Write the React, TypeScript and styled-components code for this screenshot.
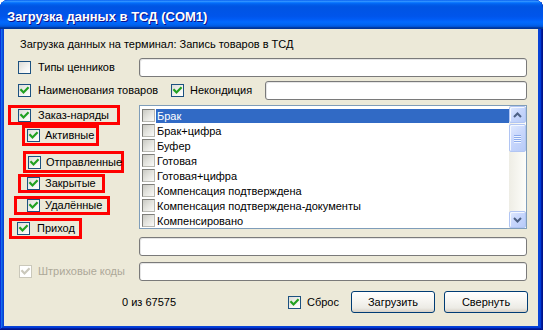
import React from "react";
import styled, { createGlobalStyle, css } from "styled-components";

const GlobalStyle = createGlobalStyle`
  html, body { margin: 0; padding: 0; background: #ffffff; }
  body { font-family: "Liberation Sans", Arial, sans-serif; font-size: 11px; color: #000; }
  * { box-sizing: border-box; }
`;

const Window = styled.div`
  width: 543px;
  height: 330px;
  display: flex;
  flex-direction: column;
  background: #0842d6;
  border-radius: 8px 8px 0 0;
  overflow: hidden;
  box-shadow: inset -1px -1px #00138c, inset 1px 1px #0831d9, inset -2px -2px #001ea0,
    inset 2px 2px #166aee, inset -3px -3px #003bda, inset 3px 3px #0855dd;
`;

const TitleBar = styled.div`
  height: 29px;
  flex: none;
  display: flex;
  align-items: center;
  padding: 3px 0 0 7px;
  color: #fff;
  font-family: "Liberation Sans", Arial, sans-serif;
  font-weight: bold;
  font-size: 13px;
  text-shadow: 1px 1px #0f1089;
  background: linear-gradient(
    180deg,
    #0058ee 0%,
    #3593ff 4%,
    #288eff 6%,
    #127dff 8%,
    #036ffc 10%,
    #0262ee 14%,
    #0057e5 20%,
    #0054e3 24%,
    #0055eb 56%,
    #005bf5 66%,
    #026afe 76%,
    #0062ef 86%,
    #0052d6 92%,
    #0040ab 94%,
    #003092 100%
  );
`;

const Body = styled.div`
  flex: 1;
  margin: 0 5px 4px 4px;
  background: #ece9d8;
  padding: 9px 11px 0 0;
  display: flex;
  flex-direction: column;
`;

const Header = styled.div`
  padding-left: 16px;
  height: 13px;
  line-height: 13px;
  white-space: nowrap;
`;

const FieldRow = styled.div<{ $mt: number }>`
  display: grid;
  grid-template-columns: 135px 1fr;
  align-items: center;
  height: 19px;
  margin-top: ${(p) => p.$mt}px;
`;

const LeftCell = styled.div<{ $pl: number }>`
  display: flex;
  align-items: center;
  padding-left: ${(p) => p.$pl}px;
  height: 100%;
`;

const FlexRow = styled.div<{ $mt: number }>`
  display: flex;
  align-items: center;
  height: 19px;
  margin-top: ${(p) => p.$mt}px;
  padding-left: 14px;
`;

const Group = styled.div<{ $w: number }>`
  width: ${(p) => p.$w}px;
  flex: none;
  display: flex;
  align-items: center;
`;

const TextBox = styled.div`
  height: 19px;
  flex: 1;
  background: #fff;
  border: 1px solid #7a7a7a;
  border-radius: 3px;
  box-shadow: inset 1px 1px #e6e6e6;
`;

const CheckLabel = styled.label<{ $gap?: number; $disabled?: boolean }>`
  display: flex;
  align-items: center;
  gap: ${(p) => p.$gap ?? 7}px;
  white-space: nowrap;
  line-height: 13px;
  color: ${(p) => (p.$disabled ? "#aca899" : "#000")};
`;

const Box = styled.span<{ $disabled?: boolean; $list?: boolean }>`
  width: 13px;
  height: 13px;
  flex: none;
  display: inline-flex;
  align-items: center;
  justify-content: center;
  border: 1px solid #1c5180;
  background: linear-gradient(135deg, #dcdcd7 0%, #f4f4f1 60%, #ffffff 100%);
  ${(p) =>
    p.$disabled &&
    css`
      border-color: #cac8bb;
      background: #ffffff;
    `}
  ${(p) =>
    p.$list &&
    css`
      border: 1px solid #7e7e7a;
      border-right-color: #b8b8b2;
      border-bottom-color: #b8b8b2;
      background: linear-gradient(135deg, #c9c9c3 0%, #e4e4df 50%, #fafaf8 100%);
    `}
`;

const CheckBox: React.FC<{ checked?: boolean; disabled?: boolean; list?: boolean }> = ({
  checked,
  disabled,
  list,
}) => (
  <Box $disabled={disabled} $list={list}>
    {checked && (
      <svg width="11" height="11" viewBox="0 0 11 11">
        <polyline
          points="2.2,5 4.5,7.4 8.8,3"
          fill="none"
          stroke={disabled ? "#cac8bb" : "#21a121"}
          strokeWidth="2.2"
          strokeLinecap="square"
        />
      </svg>
    )}
  </Box>
);

const Section = styled.div`
  display: grid;
  grid-template-columns: 135px 1fr;
  grid-template-rows: 124px;
  height: 124px;
  margin-top: 5px;
`;

const LeftColumn = styled.div`
  display: flex;
  flex-direction: column;
  align-items: flex-start;
  height: 124px;
  overflow: visible;
`;

const RedBox = styled.div<{ $ml: number; $mt: number; $w: number; $h: number; $pl: number }>`
  flex: none;
  margin-left: ${(p) => p.$ml}px;
  margin-top: ${(p) => p.$mt}px;
  width: ${(p) => p.$w}px;
  height: ${(p) => p.$h}px;
  padding-left: ${(p) => p.$pl}px;
  border: 3px solid #ff0000;
  display: flex;
  align-items: center;
`;

const ListBox = styled.div`
  height: 124px;
  display: flex;
  background: #fff;
  border: 1px solid #7f9db9;
`;

const ListRows = styled.div`
  flex: 1;
  overflow: hidden;
  padding-top: 2px;
`;

const Item = styled.div`
  height: 15px;
  display: flex;
  align-items: center;
  padding-left: 2px;
`;

const ItemText = styled.span<{ $selected?: boolean }>`
  margin-left: 1px;
  padding-left: 1px;
  height: 14px;
  line-height: 14px;
  white-space: nowrap;
  ${(p) =>
    p.$selected &&
    css`
      flex: 1;
      background: #316ac5;
      color: #fff;
    `}
`;

const ScrollBar = styled.div`
  width: 17px;
  flex: none;
  display: flex;
  flex-direction: column;
  background: linear-gradient(90deg, #eeede5 0%, #fdfdfa 100%);
`;

const scrollPart = css`
  border: 1px solid #b1c5f3;
  border-radius: 2px;
  background: linear-gradient(135deg, #e1eafe 0%, #c8d7fc 45%, #b8cbf8 100%);
  box-shadow: inset 1px 1px #f4f8ff;
  display: flex;
  align-items: center;
  justify-content: center;
`;

const ScrollButton = styled.div`
  ${scrollPart}
  height: 17px;
  flex: none;
`;

const Track = styled.div`
  flex: 1;
  padding-top: 1px;
`;

const Thumb = styled.div`
  ${scrollPart}
  height: 28px;
  flex-direction: column;
  gap: 1px;
`;

const Grip = styled.span`
  width: 7px;
  height: 1px;
  background: #8cabec;
  box-shadow: 0 1px #eef4ff;
`;

const Arrow: React.FC<{ down?: boolean }> = ({ down }) => (
  <svg width="9" height="6" viewBox="0 0 9 6">
    <polyline
      points={down ? "1,1 4.5,4.5 8,1" : "1,5 4.5,1.5 8,5"}
      fill="none"
      stroke="#4d6185"
      strokeWidth="2"
    />
  </svg>
);

const BottomRow = styled.div`
  display: flex;
  align-items: center;
  height: 22px;
  margin-top: 10px;
`;

const Counter = styled.div`
  width: 284px;
  flex: none;
  padding-left: 118px;
  white-space: nowrap;
`;

const Button = styled.button<{ $ml?: number }>`
  width: 84px;
  height: 22px;
  flex: none;
  margin-left: ${(p) => p.$ml ?? 0}px;
  font-family: "Liberation Sans", Arial, sans-serif;
  font-size: 11px;
  color: #000;
  border: 1px solid #003c74;
  border-radius: 3px;
  background: linear-gradient(180deg, #ffffff 0%, #f6f5f1 45%, #ecebe5 80%, #d6d0c5 100%);
  padding: 0;
`;

const items = [
  "Брак",
  "Брак+цифра",
  "Буфер",
  "Готовая",
  "Готовая+цифра",
  "Компенсация подтверждена",
  "Компенсация подтверждена-документы",
  "Компенсировано",
];

const subItems = [
  { label: "Заказ-наряды", ml: 4, mt: 0, w: 112, h: 20, pl: 7, gap: 7 },
  { label: "Активные", ml: 18, mt: 0, w: 77, h: 21, pl: 2, gap: 5 },
  { label: "Отправленные", ml: 19, mt: 5, w: 101, h: 22, pl: 2, gap: 5 },
  { label: "Закрытые", ml: 14, mt: 1, w: 87, h: 19, pl: 6, gap: 5 },
  { label: "Удалённые", ml: 10, mt: 3, w: 96, h: 19, pl: 10, gap: 5 },
  { label: "Приход", ml: 5, mt: 3, w: 73, h: 21, pl: 5, gap: 7 },
];

export default function App() {
  return (
    <>
      <GlobalStyle />
      <Window>
        <TitleBar>Загрузка данных в ТСД (COM1)</TitleBar>
        <Body>
          <Header>Загрузка данных на терминал: Запись товаров в ТСД</Header>

          <FieldRow $mt={7}>
            <LeftCell $pl={14}>
              <CheckLabel>
                <CheckBox />
                Типы ценников
              </CheckLabel>
            </LeftCell>
            <TextBox />
          </FieldRow>

          <FlexRow $mt={4}>
            <Group $w={153}>
              <CheckLabel>
                <CheckBox checked />
                Наименования товаров
              </CheckLabel>
            </Group>
            <Group $w={94}>
              <CheckLabel $gap={6}>
                <CheckBox checked />
                Некондиция
              </CheckLabel>
            </Group>
            <TextBox />
          </FlexRow>

          <Section>
            <LeftColumn>
              {subItems.map((s) => (
                <RedBox key={s.label} $ml={s.ml} $mt={s.mt} $w={s.w} $h={s.h} $pl={s.pl}>
                  <CheckLabel $gap={s.gap}>
                    <CheckBox checked />
                    {s.label}
                  </CheckLabel>
                </RedBox>
              ))}
            </LeftColumn>
            <ListBox>
              <ListRows>
                {items.map((it, i) => (
                  <Item key={it}>
                    <CheckBox list />
                    <ItemText $selected={i === 0}>{it}</ItemText>
                  </Item>
                ))}
              </ListRows>
              <ScrollBar>
                <ScrollButton>
                  <Arrow />
                </ScrollButton>
                <Track>
                  <Thumb>
                    <Grip />
                    <Grip />
                    <Grip />
                    <Grip />
                  </Thumb>
                </Track>
                <ScrollButton>
                  <Arrow down />
                </ScrollButton>
              </ScrollBar>
            </ListBox>
          </Section>

          <FieldRow $mt={8}>
            <LeftCell $pl={0} />
            <TextBox />
          </FieldRow>

          <FieldRow $mt={6}>
            <LeftCell $pl={15}>
              <CheckLabel $gap={6} $disabled>
                <CheckBox checked disabled />
                Штриховые коды
              </CheckLabel>
            </LeftCell>
            <TextBox />
          </FieldRow>

          <BottomRow>
            <Counter>0 из 67575</Counter>
            <Group $w={63}>
              <CheckLabel $gap={6}>
                <CheckBox checked />
                Сброс
              </CheckLabel>
            </Group>
            <Button>Загрузить</Button>
            <Button $ml={9}>Свернуть</Button>
          </BottomRow>
        </Body>
      </Window>
    </>
  );
}
